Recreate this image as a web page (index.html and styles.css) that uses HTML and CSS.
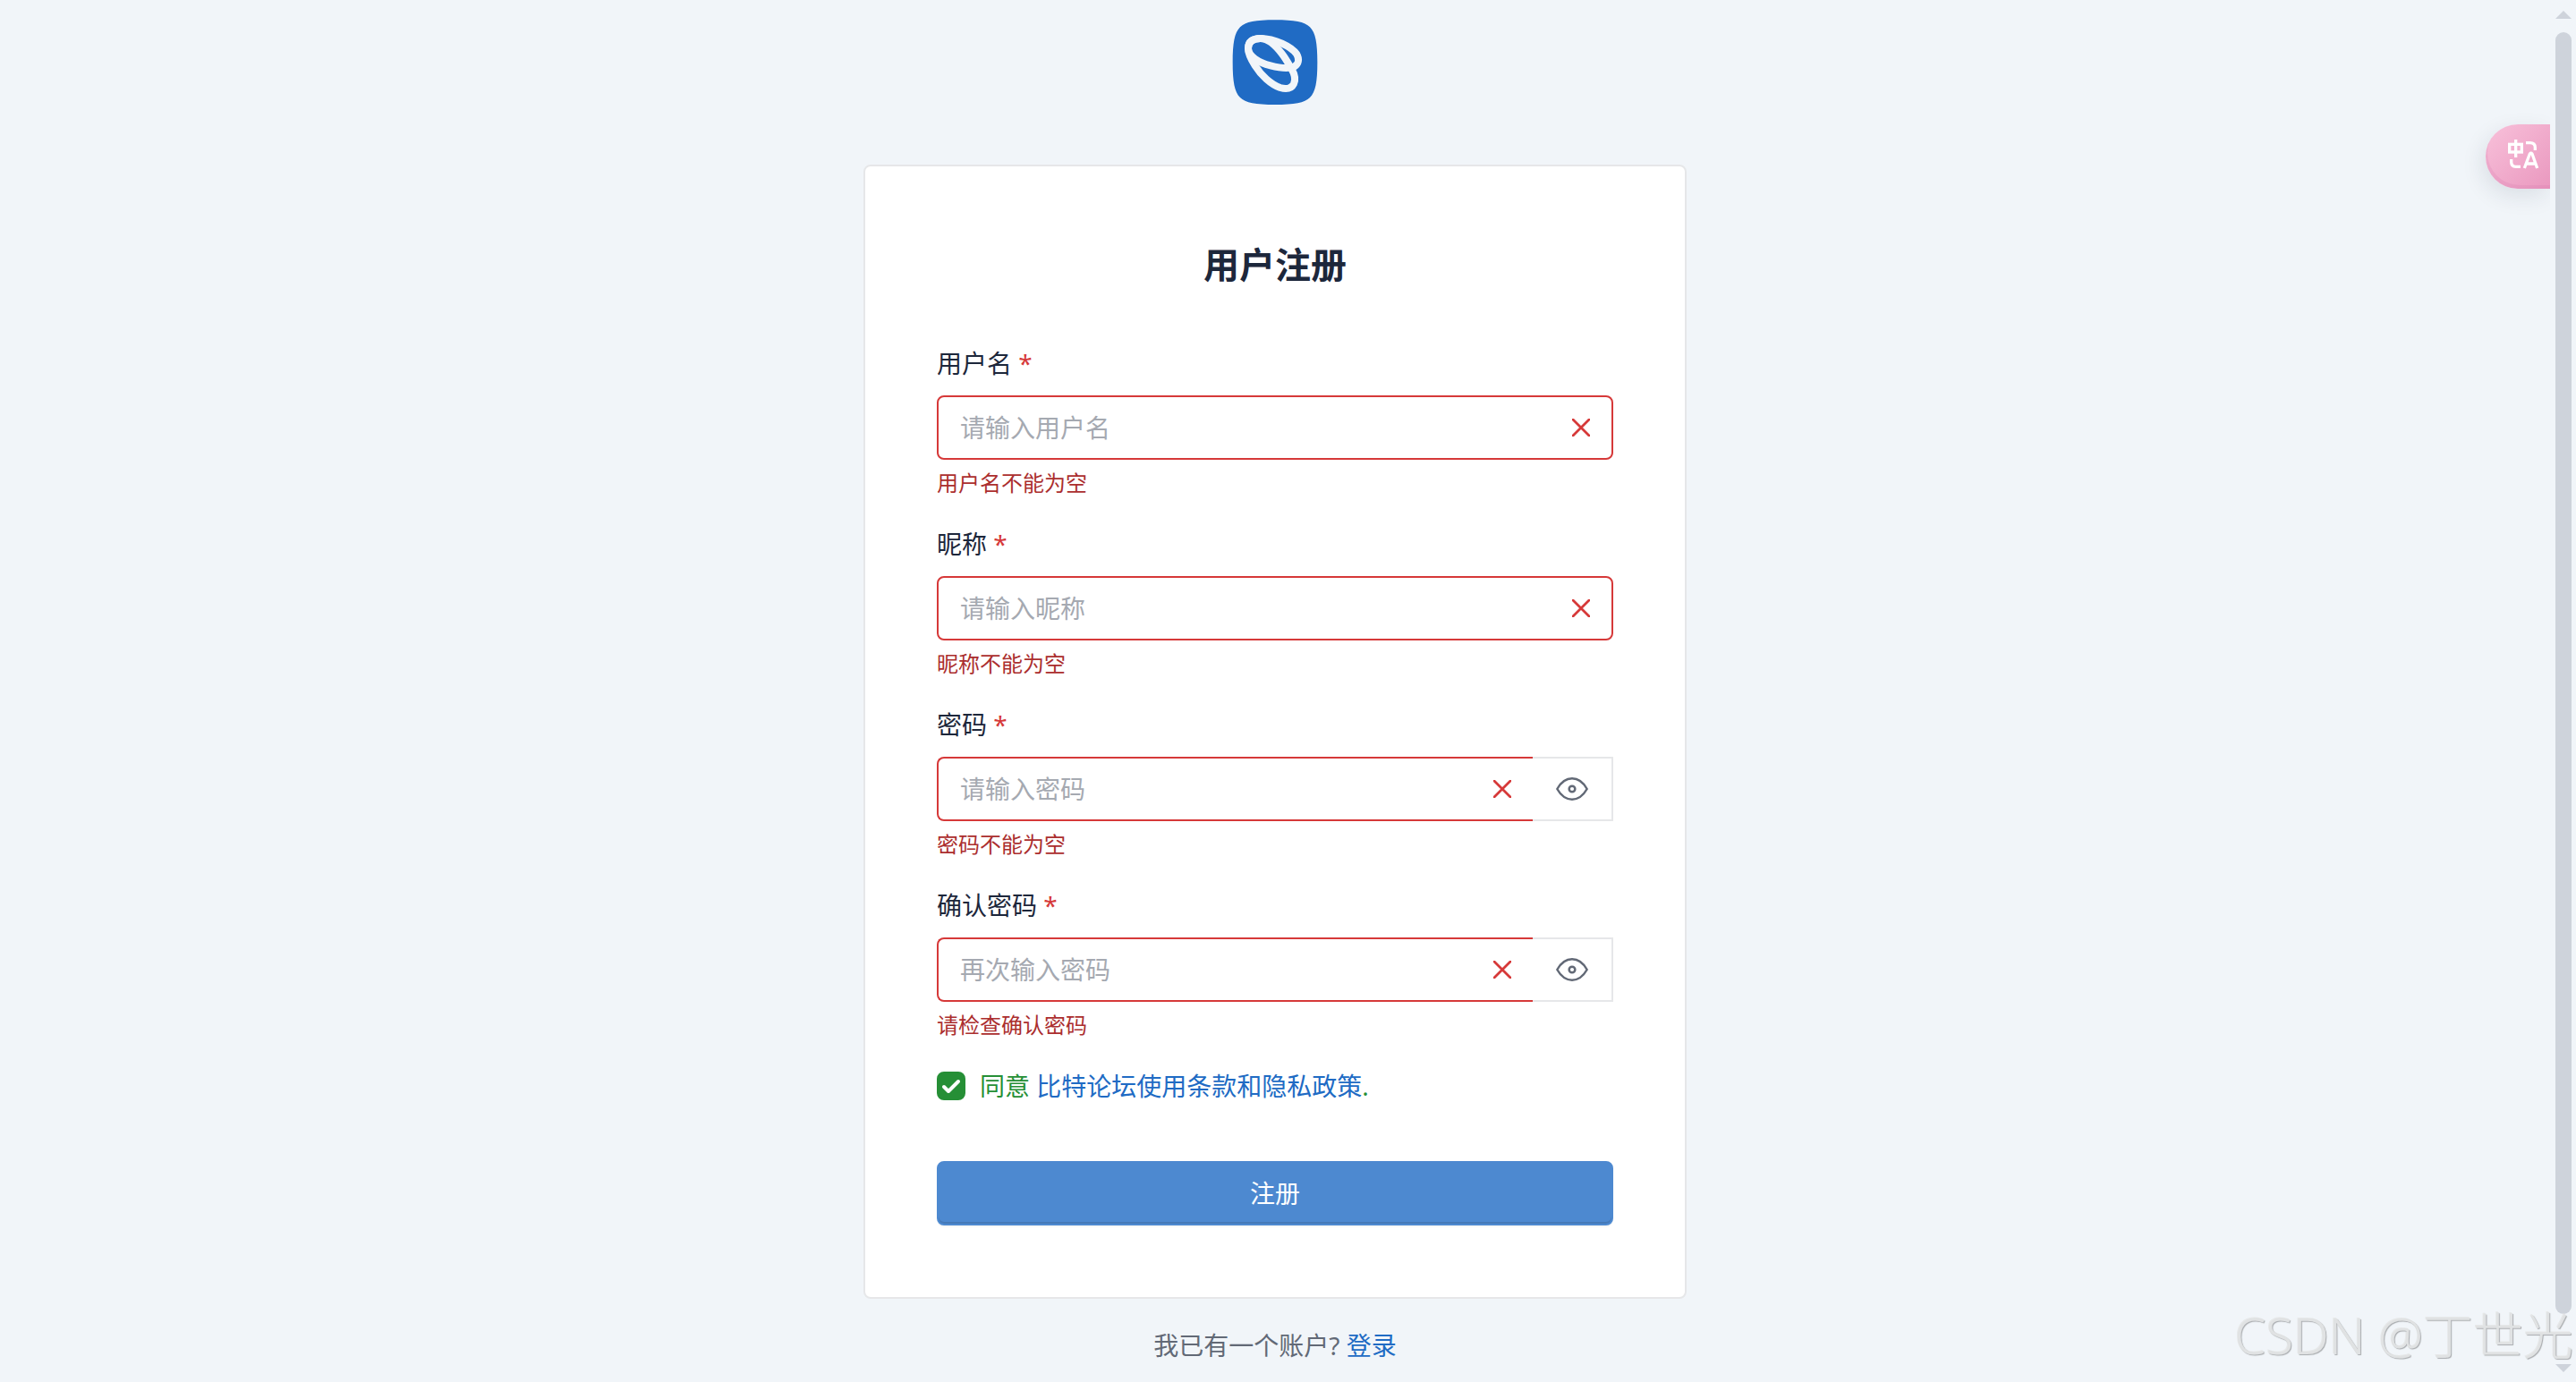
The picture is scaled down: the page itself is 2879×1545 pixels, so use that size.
FILE: index.html
```html
<!DOCTYPE html>
<html lang="zh-CN">
<head>
    <meta charset="UTF-8">
    <meta name="viewport" content="width=device-width, initial-scale=1.0">
    <title>用户注册</title>
    <link rel="stylesheet" href="styles.css">
</head>
<body>
    <main class="page">
        <a class="logo" href="#" aria-label="比特论坛">
            <svg viewBox="51 36 288 288">
                <path fill="#206bc4" d="M195 37C260 37 294 43 312 61C331 80 337 115 337 179C337 244 331 278 312 297C294 315 260 321 195 321C130 321 96 315 78 297C59 278 53 244 53 179C53 115 59 80 78 61C96 43 130 37 195 37Z"/>
                <g fill="none" stroke="#f1f5f9" stroke-width="24" stroke-linejoin="round">
                    <path d="M105 132C105 110 120 99 146 99C195 99 250 127 268 152C277 168 274 184 260 193C245 200 215 199 180 190C140 180 105 158 105 132Z"/>
                    <path d="M105 132C105 110 120 99 146 99C170 99 195 120 218 150C232 168 242 187 251 202C262 221 265 236 258 251C250 267 233 270 212 264C180 252 148 222 128 190C113 167 105 150 105 132Z"/>
                </g>
            </svg>
        </a>

        <form class="card" id="signUpForm">
            <h2 class="title">用户注册</h2>

            <div class="group">
                <label class="form-label" for="username">用户名 <span class="required">*</span></label>
                <div class="field">
                    <div class="input-box">
                        <input type="text" id="username" name="username" placeholder="请输入用户名">
                        <svg class="icon-x" viewBox="0 0 20 20"><path d="M1 1l18 18M19 1L1 19"/></svg>
                    </div>
                </div>
                <div class="feedback">用户名不能为空</div>
            </div>

            <div class="group">
                <label class="form-label" for="nickname">昵称 <span class="required">*</span></label>
                <div class="field">
                    <div class="input-box">
                        <input type="text" id="nickname" name="nickname" placeholder="请输入昵称">
                        <svg class="icon-x" viewBox="0 0 20 20"><path d="M1 1l18 18M19 1L1 19"/></svg>
                    </div>
                </div>
                <div class="feedback">昵称不能为空</div>
            </div>

            <div class="group">
                <label class="form-label" for="password">密码 <span class="required">*</span></label>
                <div class="field">
                    <div class="input-box with-addon">
                        <input type="password" id="password" name="password" placeholder="请输入密码" autocomplete="off">
                        <svg class="icon-x" viewBox="0 0 20 20"><path d="M1 1l18 18M19 1L1 19"/></svg>
                    </div>
                    <button type="button" class="addon" data-target="password" aria-label="显示密码">
                        <svg class="icon-eye" viewBox="0 0 24 24"><circle cx="12" cy="12" r="2"/><path d="M22 12c-2.667 4.667-6 7-10 7s-7.333-2.333-10-7c2.667-4.667 6-7 10-7s7.333 2.333 10 7"/></svg>
                    </button>
                </div>
                <div class="feedback">密码不能为空</div>
            </div>

            <div class="group">
                <label class="form-label" for="passwordRepeat">确认密码 <span class="required">*</span></label>
                <div class="field">
                    <div class="input-box with-addon">
                        <input type="password" id="passwordRepeat" name="passwordRepeat" placeholder="再次输入密码" autocomplete="off">
                        <svg class="icon-x" viewBox="0 0 20 20"><path d="M1 1l18 18M19 1L1 19"/></svg>
                    </div>
                    <button type="button" class="addon" data-target="passwordRepeat" aria-label="显示密码">
                        <svg class="icon-eye" viewBox="0 0 24 24"><circle cx="12" cy="12" r="2"/><path d="M22 12c-2.667 4.667-6 7-10 7s-7.333-2.333-10-7c2.667-4.667 6-7 10-7s7.333 2.333 10 7"/></svg>
                    </button>
                </div>
                <div class="feedback">请检查确认密码</div>
            </div>

            <div class="policy">
                <span class="check">
                    <input type="checkbox" id="policy" name="policy" checked>
                    <svg viewBox="0 0 32 32"><path d="M8 17l5 5L24 11"/></svg>
                </span>
                <label for="policy">同意 <a href="#">比特论坛使用条款和隐私政策</a>.</label>
            </div>

            <button type="submit" class="submit">注册</button>
        </form>

        <div class="sign-in">我已有一个账户? <a href="#">登录</a></div>
    </main>

    <div class="scrollbar" aria-hidden="true">
        <svg viewBox="0 0 18 9"><path d="M9 0l9 9H0z"/></svg>
        <div class="thumb"></div>
        <svg viewBox="0 0 18 9"><path d="M0 0h18L9 9z"/></svg>
    </div>

    <button type="button" class="translate" aria-label="翻译">
        <svg viewBox="186 462 108 126">
            <rect x="194" y="484" width="41" height="26"/>
            <path d="M215 468v60M249 479h14q17 0 17 16v9M200 534v9q0 16 15 16h16M244 564l18-48q4-5 8 0l17 48M252 549h27"/>
        </svg>
    </button>

    <div class="watermark">CSDN @丁世光</div>

    <script>
        // 显示/隐藏密码
        document.querySelectorAll('.addon').forEach(function(btn) {
            btn.addEventListener('click', function() {
                var input = document.getElementById(btn.dataset.target);
                input.type = input.type === 'password' ? 'text' : 'password';
            });
        });

        document.getElementById('signUpForm').addEventListener('submit', function(event) {
            event.preventDefault();
        });
    </script>
</body>
</html>
```

FILE: styles.css
```css
* {
    box-sizing: border-box;
}
body {
    display: flex;
    min-height: 100vh;
    margin: 0;
    background: #f1f5f9;
    color: #1d273b;
    font-family: "Noto Sans", "Noto Sans CJK SC", sans-serif;
    font-size: 28px;
    line-height: 40px;
}
input, button {
    font: inherit;
}
a {
    color: #206bc4;
    text-decoration: none;
}
a:hover {
    text-decoration: underline;
}
svg {
    display: block;
}
.page {
    flex: 1;
    display: flex;
    flex-direction: column;
    align-items: center;
    padding: 22px 16px 16px;
}
.logo {
    margin-bottom: 66px;
}
.logo svg {
    width: 96px;
    height: 96px;
}
.card {
    width: 100%;
    max-width: 920px;
    padding: 80px;
    background: #fff;
    border: 2px solid #e6e7e9;
    border-radius: 8px;
}
.title {
    margin: 0 0 60px;
    font-size: 40px;
    line-height: 60px;
    font-weight: bold;
    text-align: center;
}
.group {
    margin-bottom: 30px;
}
.form-label {
    display: block;
    margin-bottom: 16px;
}
.required {
    color: #d63939;
}
.field {
    display: flex;
}
.input-box {
    flex: 1;
    display: flex;
    align-items: center;
    padding: 0 24px;
    border: 2px solid #d63939;
    border-radius: 8px;
}
.input-box.with-addon {
    border-right: none;
    border-radius: 8px 0 0 8px;
}
.input-box input {
    flex: 1;
    min-width: 0;
    height: 68px;
    padding: 0;
    border: none;
    outline: none;
    background: transparent;
    color: #1d273b;
}
.input-box input::placeholder {
    color: #a5a9b1;
    opacity: 1;
}
.icon-x {
    width: 20px;
    height: 20px;
    fill: none;
    stroke: #d63939;
    stroke-width: 2.8;
    stroke-linecap: round;
}
.addon {
    padding: 0 24px;
    background: #fff;
    border: 2px solid #e6e7e9;
    border-left: none;
    cursor: pointer;
}
.icon-eye {
    width: 40px;
    height: 40px;
    fill: none;
    stroke: #626976;
    stroke-width: 1.5;
    stroke-linecap: round;
    stroke-linejoin: round;
}
.feedback {
    margin-top: 8px;
    color: #ab2e2e;
    font-size: 24px;
    line-height: 36px;
}
.policy {
    display: flex;
    align-items: center;
    gap: 16px;
    margin-bottom: 64px;
    color: #268f36;
}
.check {
    display: grid;
}
.check input, .check svg {
    grid-area: 1 / 1;
    width: 32px;
    height: 32px;
    margin: 0;
}
.check input {
    appearance: none;
    border: 2px solid #e6e7e9;
    border-radius: 8px;
}
.check input:checked {
    background: #268f36;
    border-color: #268f36;
}
.check svg {
    fill: none;
    stroke: #fff;
    stroke-width: 4;
    stroke-linecap: round;
    stroke-linejoin: round;
    pointer-events: none;
}
.submit {
    display: block;
    width: 100%;
    height: 72px;
    padding: 0;
    background: #4d89d0;
    color: #fff;
    border: 2px solid #4d89d0;
    border-radius: 8px;
    box-shadow: inset 0 -2px 0 rgba(29, 39, 59, 0.16), 0 2px 0 rgba(29, 39, 59, 0.04);
    cursor: pointer;
}
.submit:hover {
    background: #206bc4;
}
.sign-in {
    margin-top: 32px;
    color: #626976;
}
.scrollbar {
    display: flex;
    flex-direction: column;
    width: 29px;
    height: 100vh;
    padding: 12px 5px 11px 6px;
}
.scrollbar svg {
    width: 18px;
    height: 9px;
    fill: #ced3db;
}
.thumb {
    flex: 1;
    margin: 15px 0 56px;
    background: #ced3db;
    border-radius: 9px;
}
.translate {
    position: fixed;
    top: 139px;
    right: 29px;
    width: 72px;
    height: 72px;
    padding: 0 0 0 24px;
    border: none;
    border-radius: 36px 0 0 36px;
    background: linear-gradient(135deg, #f8c1da, #ea98bf);
    box-shadow: inset 2px -4px 0 rgba(200, 100, 160, 0.15), -4px 8px 24px rgba(29, 39, 59, 0.1);
    clip-path: inset(-40px 0 -40px -40px);
    cursor: pointer;
}
.translate svg {
    width: 36px;
    height: 42px;
    fill: none;
    stroke: #fff;
    stroke-width: 10;
}
.watermark {
    position: fixed;
    right: 3px;
    bottom: 13px;
    color: #e0e2e3;
    font-family: "Noto Sans", "Noto Sans CJK SC", sans-serif;
    font-size: 56px;
    font-weight: 300;
    line-height: 80px;
    text-shadow: 1px 1px 1px #a8abae, -1px -1px 0 #e6e8e9;
    pointer-events: none;
}
```
